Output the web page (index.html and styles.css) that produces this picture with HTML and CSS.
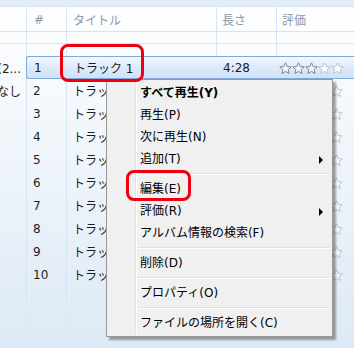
FILE: index.html
```html
<!DOCTYPE html>
<html lang="ja">

<head>
    <meta charset="UTF-8">
    <title>トラック一覧</title>
    <link rel="stylesheet" href="styles.css">
</head>

<body>
    <div class="player">
        <div class="top-strip"></div>
        <div class="list">
            <div class="head">
                <span class="c-left"></span>
                <span class="c-num">#</span>
                <span class="c-title">タイトル</span>
                <span class="c-len">長さ</span>
                <span class="c-rate">評価</span>
            </div>
            <div class="group"></div>
            <div class="rows">
                <div class="row">
                    <span class="c-left"><span>アルバム (2...</span></span>
                    <div class="cells selected">
                        <span class="c-num">1</span>
                        <span class="c-title">トラック 1</span>
                        <span class="c-len">4:28</span>
                        <span class="c-rate stars" data-on="3"></span>
                    </div>
                </div>
                <div class="row">
                    <span class="c-left"><span>なし</span></span>
                    <div class="cells">
                        <span class="c-num">2</span>
                        <span class="c-title">トラック 2</span>
                        <span class="c-len">3:51</span>
                        <span class="c-rate stars"></span>
                    </div>
                </div>
                <div class="row">
                    <span class="c-left"></span>
                    <div class="cells">
                        <span class="c-num">3</span>
                        <span class="c-title">トラック 3</span>
                        <span class="c-len">4:02</span>
                        <span class="c-rate stars"></span>
                    </div>
                </div>
                <div class="row">
                    <span class="c-left"></span>
                    <div class="cells">
                        <span class="c-num">4</span>
                        <span class="c-title">トラック 4</span>
                        <span class="c-len">3:37</span>
                        <span class="c-rate stars"></span>
                    </div>
                </div>
                <div class="row">
                    <span class="c-left"></span>
                    <div class="cells">
                        <span class="c-num">5</span>
                        <span class="c-title">トラック 5</span>
                        <span class="c-len">4:15</span>
                        <span class="c-rate stars"></span>
                    </div>
                </div>
                <div class="row">
                    <span class="c-left"></span>
                    <div class="cells">
                        <span class="c-num">6</span>
                        <span class="c-title">トラック 6</span>
                        <span class="c-len">3:44</span>
                        <span class="c-rate stars"></span>
                    </div>
                </div>
                <div class="row">
                    <span class="c-left"></span>
                    <div class="cells">
                        <span class="c-num">7</span>
                        <span class="c-title">トラック 7</span>
                        <span class="c-len">4:09</span>
                        <span class="c-rate stars"></span>
                    </div>
                </div>
                <div class="row">
                    <span class="c-left"></span>
                    <div class="cells">
                        <span class="c-num">8</span>
                        <span class="c-title">トラック 8</span>
                        <span class="c-len">3:58</span>
                        <span class="c-rate stars"></span>
                    </div>
                </div>
                <div class="row">
                    <span class="c-left"></span>
                    <div class="cells">
                        <span class="c-num">9</span>
                        <span class="c-title">トラック 9</span>
                        <span class="c-len">4:21</span>
                        <span class="c-rate stars"></span>
                    </div>
                </div>
                <div class="row">
                    <span class="c-left"></span>
                    <div class="cells">
                        <span class="c-num">10</span>
                        <span class="c-title">トラック 10</span>
                        <span class="c-len">3:33</span>
                        <span class="c-rate stars"></span>
                    </div>
                </div>
            </div>
        </div>

        <!-- 右クリックメニュー -->
        <div class="menu">
            <div class="menu-item bold">すべて再生(Y)</div>
            <div class="menu-item">再生(P)</div>
            <div class="menu-item">次に再生(N)</div>
            <div class="menu-item sub">追加(T)</div>
            <div class="menu-sep"></div>
            <div class="menu-item">編集(E)</div>
            <div class="menu-item sub">評価(R)</div>
            <div class="menu-item">アルバム情報の検索(F)</div>
            <div class="menu-sep"></div>
            <div class="menu-item">削除(D)</div>
            <div class="menu-sep"></div>
            <div class="menu-item">プロパティ(O)</div>
            <div class="menu-sep"></div>
            <div class="menu-item">ファイルの場所を開く(C)</div>
        </div>

        <!-- 赤枠 -->
        <div class="mark mark-title"></div>
        <div class="mark mark-edit"></div>
    </div>

    <svg width="0" height="0" style="position:absolute">
        <defs>
            <path id="star" d="M6.5 0.8 L8.2 4.5 L12.2 4.9 L9.2 7.5 L10.1 11.5 L6.5 9.4 L2.9 11.5 L3.8 7.5 L0.8 4.9 L4.8 4.5 Z" />
        </defs>
    </svg>

    <script>
        // 星を描く
        document.querySelectorAll('.stars').forEach((el) => {
            const on = Number(el.dataset.on || 0);
            let html = '';
            for (let i = 0; i < 5; i++) {
                const cls = i < on ? 'star on' : 'star';
                html += `<svg class="${cls}" width="13" height="12" viewBox="0 0 13 12"><use href="#star"/></svg>`;
            }
            el.innerHTML = html;
        });
    </script>
</body>

</html>
```

FILE: styles.css
```css
* {
    margin: 0;
    padding: 0;
    box-sizing: border-box;
}

body,
html {
    width: 100%;
    height: 100%;
    overflow: hidden;
}

body {
    font-family: "DejaVu Sans", "Noto Sans CJK JP", sans-serif;
    font-size: 12px;
    color: #1e1e1e;
}

.player {
    position: relative;
    height: 100%;
    background: linear-gradient(#ffffff 0%, #f4f8fc 30%, #dde9f5 100%);
}

.top-strip {
    height: 7px;
    background: #e3edf7;
    border-bottom: 1px solid #d9e5f1;
}

.list {
    height: calc(100% - 7px);
    /* 縦の区切り線 */
    background-image:
        linear-gradient(#d8e5f2, #d8e5f2),
        linear-gradient(#d8e5f2, #d8e5f2),
        linear-gradient(#d8e5f2, #d8e5f2),
        linear-gradient(#d8e5f2, #d8e5f2);
    background-size: 1px 100%;
    background-repeat: no-repeat;
    background-position: 26px 0, 66px 0, 216px 0, 276px 0;
}

.head,
.cells,
.row {
    display: flex;
    align-items: center;
}

.head {
    height: 25px;
    border-bottom: 1px solid #d6e3f0;
    color: #8c98a7;
    padding-top: 1px;
}

.group {
    height: 12px;
    border-bottom: 1px solid #d6e3f0;
}

.rows {
    padding-top: 12px;
}

.row {
    height: 23px;
}

.cells {
    flex: 1;
    height: 100%;
}

.c-left {
    width: 26px;
    flex-shrink: 0;
    display: flex;
    justify-content: flex-end;
    overflow: hidden;
    white-space: nowrap;
    padding-right: 5px;
}

.c-left span {
    flex-shrink: 0;
}

.c-num {
    width: 40px;
    padding-left: 7px;
    flex-shrink: 0;
}

.c-title {
    width: 150px;
    padding-left: 7px;
    flex-shrink: 0;
    white-space: nowrap;
    overflow: hidden;
}

.c-len {
    width: 60px;
    padding-left: 6px;
    flex-shrink: 0;
}

.c-rate {
    flex: 1;
    padding-left: 2px;
    white-space: nowrap;
}

.head .c-num {
    padding-left: 8px;
}

.head .c-rate {
    padding-left: 6px;
}

.selected {
    border: 1px solid #84a9d6;
    border-right: none;
    border-radius: 3px 0 0 3px;
    background: linear-gradient(#f3f8fe, #dbe9f9 55%, #cfe2f8);
    margin-right: -2px;
}

.stars {
    display: flex;
    align-items: center;
    height: 100%;
}

.star {
    display: block;
    fill: #fafcfe;
    stroke: #b9c5d1;
    stroke-width: 1;
}

.star.on {
    fill: #f2f5f8;
    stroke: #7c8996;
}

.menu {
    position: absolute;
    left: 106px;
    top: 79px;
    width: 227px;
    padding: 2px;
    background: #f0f0f0;
    border: 1px solid #979797;
    box-shadow: 3px 3px 2px rgba(0, 0, 0, .35);
    color: #000;
}

/* アイコン欄の線 */
.menu::before {
    content: "";
    position: absolute;
    left: 28px;
    top: 2px;
    bottom: 2px;
    width: 1px;
    background: #e2e3e3;
    border-right: 1px solid #fff;
    box-sizing: content-box;
}

.menu-item {
    position: relative;
    height: 22px;
    line-height: 22px;
    padding-left: 31px;
    white-space: nowrap;
}

.menu-item.bold {
    font-weight: bold;
}

.menu-item.sub::after {
    content: "";
    position: absolute;
    left: 210px;
    top: 8px;
    border-left: 4px solid #000;
    border-top: 4px solid transparent;
    border-bottom: 4px solid transparent;
}

.menu-sep {
    height: 8px;
    margin-left: 29px;
    position: relative;
}

.menu-sep::after {
    content: "";
    position: absolute;
    left: 0;
    right: 0;
    top: 3px;
    height: 1px;
    background: #e0e0e0;
    border-bottom: 1px solid #fff;
    box-sizing: content-box;
}

.mark {
    position: absolute;
    border: 3px solid #ee0010;
    border-radius: 8px;
}

.mark-title {
    left: 60px;
    top: 44px;
    width: 84px;
    height: 38px;
}

.mark-edit {
    left: 126px;
    top: 170px;
    width: 65px;
    height: 31px;
}
```
